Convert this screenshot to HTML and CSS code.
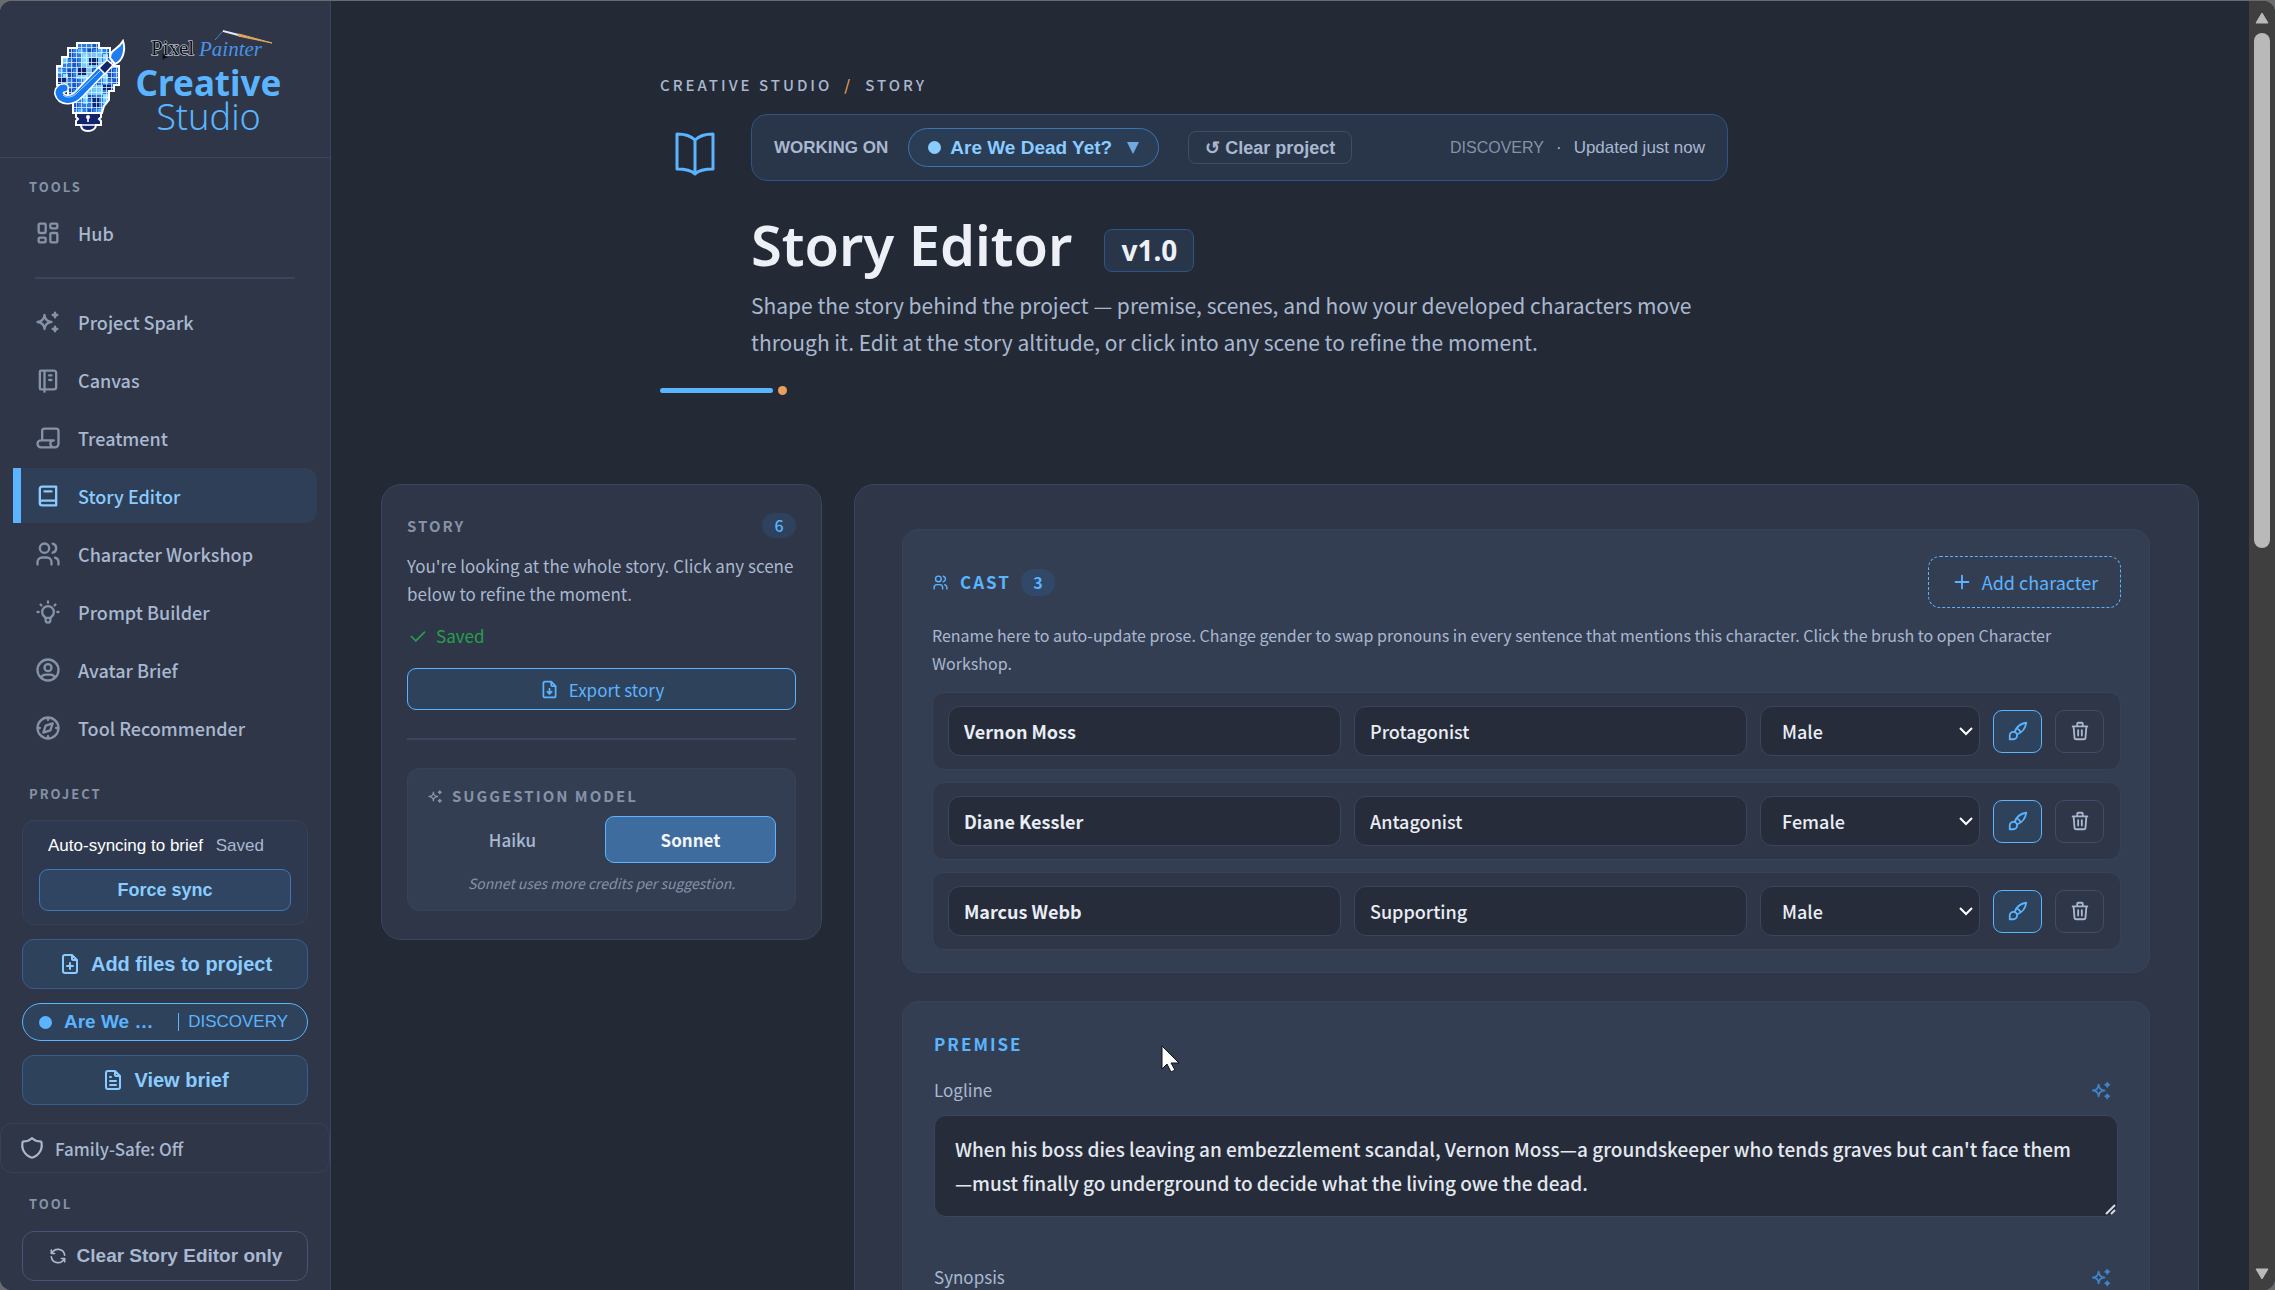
FILE: index.html
```html
<!DOCTYPE html>
<html lang="en">
<head>
<meta charset="utf-8">
<title>Story Editor</title>
<link rel="stylesheet" href="styles.css">
</head>
<body>
<svg class="sprite" aria-hidden="true">
  <symbol id="i-dash" viewBox="0 0 24 24"><path d="M5 4h4a1 1 0 0 1 1 1v6a1 1 0 0 1-1 1H5a1 1 0 0 1-1-1V5a1 1 0 0 1 1-1M5 16h4a1 1 0 0 1 1 1v2a1 1 0 0 1-1 1H5a1 1 0 0 1-1-1v-2a1 1 0 0 1 1-1M15 12h4a1 1 0 0 1 1 1v6a1 1 0 0 1-1 1h-4a1 1 0 0 1-1-1v-6a1 1 0 0 1 1-1M15 4h4a1 1 0 0 1 1 1v2a1 1 0 0 1-1 1h-4a1 1 0 0 1-1-1V5a1 1 0 0 1 1-1"/></symbol>
  <symbol id="i-spark" viewBox="0 0 24 24"><path d="M16 18a2 2 0 0 1 2 2a2 2 0 0 1 2-2a2 2 0 0 1-2-2a2 2 0 0 1-2 2zM16 6a2 2 0 0 1 2 2a2 2 0 0 1 2-2a2 2 0 0 1-2-2a2 2 0 0 1-2 2zM9 18a6 6 0 0 1 6-6a6 6 0 0 1-6-6a6 6 0 0 1-6 6a6 6 0 0 1 6 6z"/></symbol>
  <symbol id="i-note" viewBox="0 0 24 24"><path d="M6 4h11a2 2 0 0 1 2 2v12a2 2 0 0 1-2 2H6a1 1 0 0 1-1-1V5a1 1 0 0 1 1-1M9 4v18M13 8h2M13 12h2"/></symbol>
  <symbol id="i-script" viewBox="0 0 24 24"><path d="M17 20H6a3 3 0 0 1 0-6h11a3 3 0 0 0 0 6h1a3 3 0 0 0 3-3V6a2 2 0 0 0-2-2H9a2 2 0 0 0-2 2v8"/></symbol>
  <symbol id="i-book" viewBox="0 0 24 24"><path d="M19 4v16H7a2 2 0 0 1-2-2V6a2 2 0 0 1 2-2h12zM19 16H7a2 2 0 0 0-2 2M9 8h6"/></symbol>
  <symbol id="i-users" viewBox="0 0 24 24"><path d="M5 7a4 4 0 1 0 8 0a4 4 0 1 0-8 0M3 21v-2a4 4 0 0 1 4-4h4a4 4 0 0 1 4 4v2M16 3.130a4 4 0 0 1 0 7.750M21 21v-2a4 4 0 0 0-3-3.850"/></symbol>
  <symbol id="i-bulb" viewBox="0 0 24 24"><path d="M3 12h1M12 3v1M20 12h1M5.600 5.600l.7.7M18.400 5.600l-.7.7M9 16a5 5 0 1 1 6 0a3.500 3.500 0 0 0-1 3a2 2 0 0 1-4 0a3.500 3.500 0 0 0-1-3M9.700 17h4.600"/></symbol>
  <symbol id="i-user" viewBox="0 0 24 24"><path d="M3 12a9 9 0 1 0 18 0a9 9 0 1 0-18 0M9 10a3 3 0 1 0 6 0a3 3 0 1 0-6 0M6.168 18.849a4 4 0 0 1 3.832-2.849h4a4 4 0 0 1 3.834 2.855"/></symbol>
  <symbol id="i-compass" viewBox="0 0 24 24"><path d="M8 16l2-6l6-2l-2 6zM3 12a9 9 0 1 0 18 0a9 9 0 1 0-18 0M12 3v2M12 19v2M3 12h2M19 12h2"/></symbol>
  <symbol id="i-fplus" viewBox="0 0 24 24"><path d="M14 3v4a1 1 0 0 0 1 1h4M17 21H7a2 2 0 0 1-2-2V5a2 2 0 0 1 2-2h7l5 5v11a2 2 0 0 1-2 2zM12 11v6M9 14h6"/></symbol>
  <symbol id="i-ftext" viewBox="0 0 24 24"><path d="M14 3v4a1 1 0 0 0 1 1h4M17 21H7a2 2 0 0 1-2-2V5a2 2 0 0 1 2-2h7l5 5v11a2 2 0 0 1-2 2zM9 9h1M9 13h6M9 17h6"/></symbol>
  <symbol id="i-fdown" viewBox="0 0 24 24"><path d="M14 3v4a1 1 0 0 0 1 1h4M17 21H7a2 2 0 0 1-2-2V5a2 2 0 0 1 2-2h7l5 5v11a2 2 0 0 1-2 2zM12 17v-6M9.500 14.500l2.500 2.500l2.500-2.500"/></symbol>
  <symbol id="i-shield" viewBox="0 0 24 24"><path d="M12 3a12 12 0 0 0 8.500 3a12 12 0 0 1-8.500 15a12 12 0 0 1-8.500-15a12 12 0 0 0 8.500-3"/></symbol>
  <symbol id="i-refresh" viewBox="0 0 24 24"><path d="M20 11a8.100 8.100 0 0 0-15.500-2M4 5v4h4M4 13a8.100 8.100 0 0 0 15.500 2M20 19v-4h-4"/></symbol>
  <symbol id="i-check" viewBox="0 0 24 24"><path d="M5 12l5 5L20 7"/></symbol>
  <symbol id="i-plus" viewBox="0 0 24 24"><path d="M12 5v14M5 12h14"/></symbol>
  <symbol id="i-brush" viewBox="0 0 24 24"><path d="M3 21v-4a4 4 0 1 1 4 4H3M21 3A16 16 0 0 0 8.200 13.200M21 3a16 16 0 0 1-10.200 12.800M10.600 9a9 9 0 0 1 4.400 4.400"/></symbol>
  <symbol id="i-trash" viewBox="0 0 24 24"><path d="M4 7h16M10 11v6M14 11v6M5 7l1 12a2 2 0 0 0 2 2h8a2 2 0 0 0 2-2l1-12M9 7V4a1 1 0 0 1 1-1h4a1 1 0 0 1 1 1v3"/></symbol>
</svg>

<div class="app">
  <aside class="sidebar">
    <div class="brand">
      <svg class="brand-mark" viewBox="0 0 76 96" aria-hidden="true">
        <defs>
          <pattern id="px" width="20" height="20" patternUnits="userSpaceOnUse">
            <rect width="20" height="20" fill="#2f7de6"/>
            <rect width="5" height="10" fill="#1b57c4"/><rect x="10" width="5" height="5" fill="#6cc8ff"/>
            <rect x="5" y="10" width="5" height="5" fill="#55b2ff"/><rect x="15" y="10" width="5" height="10" fill="#1a4db4"/>
            <rect x="10" y="15" width="5" height="5" fill="#8fe0ff"/>
          </pattern>
          <pattern id="grid" width="5" height="5" x="3" y="3" patternUnits="userSpaceOnUse"><path d="M0 0h5M0 0v5" stroke="#e6f4ff" stroke-width="1.400"/></pattern>
          <clipPath id="shape"><path d="M24 4h22v5h11v9h4v9h5v19h-5v6h-5v9l-5 6l-2 7H20V61h-5v-9H9v-6H4V27h5v-9h6V9h9z"/></clipPath>
        </defs>
        <g clip-path="url(#shape)">
          <rect width="76" height="76" fill="url(#px)"/>
          <path d="M28 14h20v14H38v12H24V28h4zM34 46h16v10H34z" fill="#8adfff" opacity=".8"/>
          <path d="M36 19h9v7h-9zM25 28h9v8h-9zM5 38h9v7H5zM40 58h6v10h-6zM50 46h8v5h-8z" fill="#12256b"/>
          <rect width="76" height="76" fill="url(#grid)"/>
        </g>
        <path d="M24 4h22v5h11v9h4v9h5v19h-5v6h-5v9l-5 6l-2 7H20V61h-5v-9H9v-6H4V27h5v-9h6V9h9z" fill="none" stroke="#fff" stroke-width="2"/>
        <path d="M23 74h25v4l-2 2l2 2v4h-5c0 4-4 6-8 6s-7-2-7-6h-5v-4l2-2l-2-2z" fill="#14246a" stroke="#fff" stroke-width="2"/>
        <path d="M24 86h23M35 77v6" stroke="#fff" stroke-width="1.600"/>
        <circle cx="35" cy="78" r="2" fill="#fff"/>
        <path d="M50 30L26 55c-7 8-18 7-20-1c0-3 2-5 5-5" fill="none" stroke="#fff" stroke-width="10" stroke-linecap="round"/>
        <path d="M50 30L26 55c-7 8-18 7-20-1c0-3 2-5 5-5" fill="none" stroke="#1679f2" stroke-width="7" stroke-linecap="round"/>
        <path d="M47 32L24 54c-5 5-11 5-14 2" fill="none" stroke="#a9dcff" stroke-width="1"/>
        <path d="M54 21l6 5-8 9-6-6z" fill="#12256b" stroke="#fff" stroke-width="1.600"/>
        <path d="M57 19c0-9 8-8 13-17c3 9 0 20-8 23z" fill="#1f7df0" stroke="#fff" stroke-width="2"/>
      </svg>
      <div class="brand-words">
        <svg class="brand-sig" viewBox="-4 -4 128 38" aria-hidden="true">
          <text x="2" y="26" class="sig-pixel">Pixel</text>
          <text x="50" y="27" class="sig-painter">Painter</text>
          <path d="M66 11l8-9" stroke="#3b86d8" stroke-width="1" fill="none"/>
          <path d="M74 1l16 4-1 2-15-4z" fill="#dfe9fb"/><path d="M90 5l33 9-34-7z" fill="#e0a860" stroke="#e0a860" stroke-width="1"/>
          <path d="M13 24l6 5-3 0-2 2z" fill="#0b0d12"/>
        </svg>
        <strong class="brand-name">Creative</strong>
        <span class="brand-sub">Studio</span>
      </div>
    </div>

    <h2 class="side-label">TOOLS</h2>
    <nav class="nav">
      <a href="#hub"><svg class="icon"><use href="#i-dash"/></svg>Hub</a>
      <hr>
      <a href="#spark"><svg class="icon"><use href="#i-spark"/></svg>Project Spark</a>
      <a href="#canvas"><svg class="icon"><use href="#i-note"/></svg>Canvas</a>
      <a href="#treatment"><svg class="icon"><use href="#i-script"/></svg>Treatment</a>
      <a href="#story" class="active" aria-current="page"><svg class="icon"><use href="#i-book"/></svg>Story Editor</a>
      <a href="#characters"><svg class="icon"><use href="#i-users"/></svg>Character Workshop</a>
      <a href="#prompts"><svg class="icon"><use href="#i-bulb"/></svg>Prompt Builder</a>
      <a href="#avatar"><svg class="icon"><use href="#i-user"/></svg>Avatar Brief</a>
      <a href="#recommender"><svg class="icon"><use href="#i-compass"/></svg>Tool Recommender</a>
    </nav>

    <h2 class="side-label project-label">PROJECT</h2>
    <div class="side-stack">
      <div class="sync">
        <p>Auto-syncing to brief <span>Saved</span></p>
        <button type="button" class="sync-btn">Force sync</button>
      </div>
      <button type="button" class="side-btn"><svg class="icon"><use href="#i-fplus"/></svg>Add files to project</button>
      <button type="button" class="side-pill"><i class="dot"></i><b>Are We …</b><span>DISCOVERY</span></button>
      <button type="button" class="side-btn"><svg class="icon"><use href="#i-ftext"/></svg>View brief</button>
    </div>
    <button type="button" class="family"><svg class="icon"><use href="#i-shield"/></svg>Family-Safe: Off</button>
    <h2 class="side-label tool-label">TOOL</h2>
    <div class="side-stack">
      <button type="button" class="side-btn quiet"><svg class="icon"><use href="#i-refresh"/></svg>Clear Story Editor only</button>
    </div>
  </aside>

  <main class="main">
    <header class="page-head">
      <div class="crumbs"><a href="#home">CREATIVE STUDIO</a><i>/</i><span>STORY</span></div>
      <div class="head-grid">
        <svg class="head-icon" viewBox="0 0 42 46" aria-hidden="true"><path d="M3 3c8 0 14 2 18 6c4-4 10-6 18-6v35c-8 0-14 1-18 5c-4-4-10-5-18-5zM21 9v34"/></svg>
        <div class="head-body">
          <div class="working">
            <span class="working-label">WORKING ON</span>
            <button type="button" class="project-pill"><i class="dot"></i>Are We Dead Yet?<svg class="caret" viewBox="0 0 12 12"><path d="M0 0h12L6 12z"/></svg></button>
            <button type="button" class="clear-btn">↺ Clear project</button>
            <span class="stage">DISCOVERY</span><span class="sep">·</span><span class="updated">Updated just now</span>
          </div>
          <div class="title-row"><h1>Story Editor</h1><span class="version">v1.0</span></div>
          <p class="lede">Shape the story behind the project — premise, scenes, and how your developed characters move through it. Edit at the story altitude, or click into any scene to refine the moment.</p>
        </div>
      </div>
      <div class="accent"><i></i><b></b></div>
    </header>

    <div class="columns">
      <section class="story-card">
        <div class="card-top"><h2>STORY</h2><span class="count">6</span></div>
        <p class="story-text">You're looking at the whole story. Click any scene below to refine the moment.</p>
        <p class="saved"><svg class="icon"><use href="#i-check"/></svg>Saved</p>
        <button type="button" class="export"><svg class="icon"><use href="#i-fdown"/></svg>Export story</button>
        <hr>
        <div class="model">
          <h3><svg class="icon"><use href="#i-spark"/></svg>SUGGESTION MODEL</h3>
          <div class="model-row">
            <button type="button">Haiku</button>
            <button type="button" class="on" aria-pressed="true">Sonnet</button>
          </div>
          <p>Sonnet uses more credits per suggestion.</p>
        </div>
      </section>

      <section class="editor">
        <div class="panel cast">
          <div class="cast-head">
            <h2><svg class="icon"><use href="#i-users"/></svg>CAST</h2><span class="count">3</span>
            <button type="button" class="add"><svg class="icon"><use href="#i-plus"/></svg>Add character</button>
          </div>
          <p class="cast-text">Rename here to auto-update prose. Change gender to swap pronouns in every sentence that mentions this character. Click the brush to open Character Workshop.</p>
          <div class="rows">
            <div class="row">
              <input class="name" aria-label="Name" value="Vernon Moss"><input aria-label="Role" value="Protagonist">
              <select aria-label="Gender"><option>Male</option><option>Female</option></select>
              <button type="button" class="sq brush" aria-label="Open in Character Workshop"><svg class="icon"><use href="#i-brush"/></svg></button>
              <button type="button" class="sq" aria-label="Delete"><svg class="icon"><use href="#i-trash"/></svg></button>
            </div>
            <div class="row">
              <input class="name" aria-label="Name" value="Diane Kessler"><input aria-label="Role" value="Antagonist">
              <select aria-label="Gender"><option>Female</option><option>Male</option></select>
              <button type="button" class="sq brush" aria-label="Open in Character Workshop"><svg class="icon"><use href="#i-brush"/></svg></button>
              <button type="button" class="sq" aria-label="Delete"><svg class="icon"><use href="#i-trash"/></svg></button>
            </div>
            <div class="row">
              <input class="name" aria-label="Name" value="Marcus Webb"><input aria-label="Role" value="Supporting">
              <select aria-label="Gender"><option>Male</option><option>Female</option></select>
              <button type="button" class="sq brush" aria-label="Open in Character Workshop"><svg class="icon"><use href="#i-brush"/></svg></button>
              <button type="button" class="sq" aria-label="Delete"><svg class="icon"><use href="#i-trash"/></svg></button>
            </div>
          </div>
        </div>

        <div class="panel premise">
          <h2>PREMISE</h2>
          <div class="field-head"><label for="logline">Logline</label><button type="button" class="suggest" aria-label="Suggest logline"><svg class="icon"><use href="#i-spark"/></svg></button></div>
          <textarea id="logline" rows="2">When his boss dies leaving an embezzlement scandal, Vernon Moss—a groundskeeper who tends graves but can't face them—must finally go underground to decide what the living owe the dead.</textarea>
          <div class="field-head"><label for="synopsis">Synopsis</label><button type="button" class="suggest" aria-label="Suggest synopsis"><svg class="icon"><use href="#i-spark"/></svg></button></div>
          <textarea id="synopsis" rows="4"></textarea>
        </div>
      </section>
    </div>
  </main>

  <div class="scrollbar" aria-hidden="true">
    <svg viewBox="0 0 14 12"><path d="M7 1l6 10H1z"/></svg>
    <div class="track"><div class="thumb"></div></div>
    <svg viewBox="0 0 14 12"><path d="M1 1h12L7 11z"/></svg>
  </div>
</div>
<svg class="cursor" viewBox="0 0 19 28" aria-hidden="true"><path d="M1 1v23l5-5l4 8l4-2l-4-7h8z"/></svg>
</body>
</html>
```
FILE: styles.css
```css
:root {
  --bg: #242a35;
  --card: #2e3647;
  --inner: #343e52;
  --input: #262c39;
  --line: #3a4560;
  --accent: #5ab4ff;
  --light: #8accff;
  --text: #a9b8d0;
  --muted: #8592a8;
  --tint: #2f425b;
  --sans: "Noto Sans CJK SC", "Noto Sans", sans-serif;
  --arial: "Liberation Sans", Arial, sans-serif;
  --head: "Noto Sans", sans-serif;
}
* { box-sizing: border-box; }
body { margin: 0; background: #6a6b6e; color: var(--text); font-family: var(--sans); font-size: 17px; overflow: hidden; }
h1, h2, h3, p { margin: 0; }
button, input, select, textarea { font: inherit; color: inherit; margin: 0; }
button { display: flex; align-items: center; justify-content: center; padding: 0; border: 1px solid transparent; background: none; }
a { color: inherit; text-decoration: none; }
.sprite { display: none; }
.icon { width: 24px; height: 24px; flex: none; fill: none; stroke: currentColor; stroke-width: 2; stroke-linecap: round; stroke-linejoin: round; }
.dot { width: 13px; height: 13px; border-radius: 50%; background: currentColor; flex: none; }

.app { display: flex; height: calc(100vh - 1px); margin-top: 1px; background: var(--bg); border-radius: 12px; overflow: hidden; }

/* Sidebar */
.sidebar { flex: 0 0 331px; background: var(--card); border-right: 1px solid var(--line); overflow: hidden; }
.brand { display: flex; justify-content: center; gap: 8px; height: 157px; padding: 24px 0 0 3px; border-bottom: 1px solid var(--line); }
.brand-mark { width: 76px; height: 96px; margin-top: 14px; }
.brand-words { display: flex; flex-direction: column; align-items: center; width: 144px; font-family: var(--head); color: var(--accent); font-size: 36px; line-height: 34px; }
.brand-sig { width: 128px; height: 38px; flex: none; margin-bottom: 3px; }
.sig-pixel { font: 21px "Liberation Serif", serif; fill: #0b0d12; stroke: #e8ecf4; stroke-width: 1; paint-order: stroke; }
.sig-painter { font: italic 21px "Liberation Serif", serif; fill: #4a93e6; }
.brand-name { font-size: 35px; font-weight: 700; }
.brand-sub { font-weight: 300; }
.side-label { padding: 0 29px; font-size: 13px; line-height: 20px; font-weight: 700; letter-spacing: 2px; color: var(--muted); margin-top: 19px; }
.nav { display: flex; flex-direction: column; gap: 3px; padding: 8px 13px 0; font-size: 18px; font-weight: 500; }
.nav a { display: flex; align-items: center; gap: 16px; height: 55px; padding-left: 13px; border-left: 8px solid transparent; border-radius: 0 12px 12px 0; }
.nav .icon { width: 28px; height: 28px; color: var(--muted); }
.nav hr { width: 260px; height: 2px; border: 0; background: var(--line); margin: 14px auto 12px; }
.nav .active { background: #2f3f57; border-color: var(--accent); color: var(--light); }
.nav .active .icon { color: var(--light); }
.project-label { margin-top: 29px; margin-bottom: 16px; }
.side-stack { display: flex; flex-direction: column; gap: 14px; padding: 0 22px; font-family: var(--arial); }
.sync { border: 1px solid #374259; border-radius: 12px; background: #2e3950; padding: 16px 16px 13px; }
.sync p { font-size: 17px; line-height: 18px; padding-left: 9px; color: #fff; white-space: nowrap; margin-bottom: 14px; }
.sync span { color: var(--text); margin-left: 8px; }
.sync-btn { width: 100%; height: 42px; border-color: #3f78b4; border-radius: 9px; background: #2f4561; color: var(--light); font-size: 18px; font-weight: 700; }
.side-btn { width: 100%; height: 50px; gap: 9px; border-color: #355f8f; border-radius: 12px; background: var(--tint); color: var(--light); font-size: 20px; font-weight: 700; white-space: nowrap; }
.side-pill { width: 100%; height: 38px; justify-content: flex-start; gap: 12px; padding: 0 19px 0 16px; border-color: var(--accent); border-radius: 19px; background: var(--tint); color: var(--accent); font-size: 19px; }
.side-pill span { margin-left: auto; padding-left: 9px; border-left: 1px solid currentColor; font-size: 17px; line-height: 18px; }
.family { width: 330px; height: 50px; margin-top: 18px; padding-left: 18px; justify-content: flex-start; gap: 10px; border-color: #374259; border-radius: 12px; font-size: 17px; font-weight: 500; }
.family .icon { width: 26px; height: 26px; }
.tool-label { margin-top: 21px; margin-bottom: 17px; }
.quiet { background: none; border-color: #465576; color: var(--text); font-size: 19px; }
.quiet .icon { width: 20px; height: 20px; }

/* Header */
.main { flex: 1; min-width: 0; padding: 72px 50px 0; overflow: hidden; }
.page-head { width: 100%; max-width: 1260px; margin: 0 auto; }
.crumbs { display: flex; gap: 12px; font-size: 15px; line-height: 24px; font-weight: 500; letter-spacing: 3px; }
.crumbs i { color: #e8a05c; font-style: normal; }
.head-grid { display: flex; gap: 34px; margin-top: 17px; padding-left: 14px; }
.head-icon { width: 42px; height: 46px; flex: none; margin: 17px 1px 0 0; fill: none; stroke: var(--accent); stroke-width: 3; stroke-linejoin: round; stroke-linecap: round; }
.head-body { flex: 0 1 977px; }
.working { display: flex; align-items: center; height: 67px; padding: 0 22px; border: 1px solid #2e5583; border-radius: 16px; background: #293549; font-family: var(--arial); font-size: 17px; white-space: nowrap; }
.working-label { font-weight: 700; margin-right: 20px; }
.project-pill { height: 39px; gap: 9px; padding: 0 19px; border-color: #3b76b3; border-radius: 20px; background: #2b3c55; color: var(--light); font-size: 19px; font-weight: 700; }
.caret { width: 12px; height: 12px; margin-left: 6px; fill: #6fa9e0; }
.clear-btn { height: 33px; margin: 0 auto 0 29px; padding: 0 16px; border-color: #414d68; border-radius: 8px; font-size: 18px; font-weight: 700; }
.stage { color: var(--muted); font-size: 16px; }
.sep { margin: 0 12px; }
.title-row { display: flex; align-items: center; gap: 32px; margin-top: 26px; }
h1 { font-family: var(--head); font-size: 56px; line-height: 74px; font-weight: 600; color: #edf0f6; }
.version { margin-top: 12px; padding: 0 16px; border: 1px solid #2e5583; border-radius: 8px; background: #293549; font: 700 28px/41px var(--head); color: #edf0f6; }
.lede { font-size: 21px; line-height: 37px; margin-top: 6px; }
.accent { display: flex; align-items: center; gap: 5px; margin-top: 25px; }
.accent i { width: 113px; height: 5px; border-radius: 3px; background: var(--accent); }
.accent b { width: 9px; height: 9px; border-radius: 50%; background: #e8a05c; }

/* Columns */
.columns { display: flex; align-items: flex-start; gap: 32px; margin-top: 89px; }
.story-card { flex: 0 0 441px; padding: 28px 25px; border: 1px solid var(--line); border-radius: 20px; background: var(--card); }
.card-top { display: flex; align-items: center; justify-content: space-between; }
.card-top h2, .model h3 { font-size: 15px; line-height: 24px; font-weight: 700; letter-spacing: 2px; color: var(--muted); }
.count { min-width: 34px; padding: 0 10px; border-radius: 13px; background: #2f425d; color: var(--accent); font-size: 16px; line-height: 25px; font-weight: 500; text-align: center; }
.story-text { margin-top: 14px; font-size: 17px; line-height: 28px; }
.saved { display: flex; align-items: center; gap: 8px; margin-top: 16px; font-size: 17px; line-height: 24px; color: #25a04d; }
.saved .icon { width: 21px; height: 21px; }
.export { width: 100%; height: 42px; gap: 9px; margin-top: 20px; border-color: var(--accent); border-radius: 9px; background: var(--tint); color: var(--accent); }
.export .icon { width: 21px; height: 21px; }
.story-card hr { height: 2px; border: 0; background: var(--line); margin: 28px 0; }
.model { padding: 15px 19px; border: 1px solid #38435a; border-radius: 12px; background: var(--inner); }
.model h3 { display: flex; align-items: center; gap: 8px; }
.model h3 .icon { width: 17px; height: 17px; }
.model-row { display: grid; grid-template-columns: 1fr 1fr; gap: 7px; margin-top: 8px; }
.model-row button { height: 47px; border-radius: 9px; font-weight: 500; }
.model-row .on { border-color: var(--accent); background: #3f6c9f; color: #f3f5f9; font-weight: 700; }
.model p { margin-top: 8px; font-size: 14px; line-height: 24px; font-style: italic; color: var(--muted); text-align: center; }

.editor { flex: 1; min-width: 0; display: flex; flex-direction: column; gap: 28px; padding: 44px 48px 44px 47px; border: 1px solid var(--line); border-radius: 20px; background: var(--card); }
.panel { border: 1px solid #38435a; border-radius: 16px; background: var(--inner); }
.cast { padding: 26px 28px 22px 29px; }
.cast-head { display: flex; align-items: center; gap: 10px; }
.cast-head .count { background: #314868; font-weight: 700; line-height: 27px; }
.panel h2 { display: flex; align-items: center; gap: 11px; font-size: 17px; line-height: 24px; font-weight: 700; letter-spacing: 2px; color: var(--accent); }
.cast-head h2 .icon { width: 17px; height: 17px; }
.add { margin-left: auto; width: 193px; height: 52px; gap: 9px; border: 1px dashed var(--accent); border-radius: 12px; color: var(--accent); font-size: 18px; }
.add .icon { width: 22px; height: 22px; }
.cast-text { margin-top: 13px; font-size: 16px; line-height: 28px; }
.rows { display: flex; flex-direction: column; gap: 12px; margin-top: 15px; }
.row { display: grid; grid-template-columns: 1fr 1fr 220px 49px 49px; align-items: center; gap: 13px; padding: 13px 16px 13px 15px; border: 1px solid #38435a; border-radius: 12px; background: var(--card); }
.row input, .row select { width: 100%; height: 50px; padding: 0 15px; border: 1px solid var(--line); border-radius: 12px; background: var(--input); color: #e9edf5; font-size: 18px; font-weight: 500; }
.row .name { font-weight: 700; }
.row select { padding: 0 0 0 21px; appearance: none; background: var(--input) url("data:image/svg+xml,%3Csvg xmlns='http://www.w3.org/2000/svg' width='16' height='10'%3E%3Cpath d='M2 2l6 6l6-6' fill='none' stroke='%23fff' stroke-width='2'/%3E%3C/svg%3E") no-repeat right 5px center; }
.sq { height: 43px; border-color: #414d68; border-radius: 9px; }
.sq .icon { width: 22px; height: 22px; }
.brush { border-color: var(--accent); background: var(--tint); color: var(--accent); }
.premise { padding: 30px 31px; }
.field-head { display: flex; align-items: center; justify-content: space-between; margin-top: 20px; margin-bottom: 11px; font-size: 17px; line-height: 28px; }
.suggest { width: 34px; height: 28px; color: #3f83c8; }
.suggest .icon { width: 23px; height: 23px; }
textarea { display: block; width: 100%; padding: 16px 35px 16px 20px; border: 1px solid var(--line); border-radius: 12px; background: var(--input); color: #e3e8f0; font-size: 19px; line-height: 34px; font-weight: 500; resize: vertical; overflow: hidden; }
textarea::-webkit-resizer { background: url("data:image/svg+xml,%3Csvg xmlns='http://www.w3.org/2000/svg' width='15' height='15'%3E%3Cpath d='M4 13l9-9M9 13l4-4' fill='none' stroke='%23d8dce4' stroke-width='2'/%3E%3C/svg%3E") no-repeat right bottom; }
textarea + .field-head { margin-top: 46px; }

/* Scrollbar */
.scrollbar { flex: 0 0 26px; display: flex; flex-direction: column; align-items: center; gap: 9px; padding: 11px 0 10px; background: #3f3f3f; }
.scrollbar svg { width: 14px; height: 12px; fill: #bababa; stroke: #bababa; stroke-width: 1; stroke-linejoin: round; }
.track { flex: 1; width: 16px; }
.thumb { height: 42%; border-radius: 8px; background: #b9b9b9; }

.cursor { position: absolute; left: 1161px; top: 1045px; width: 19px; height: 28px; fill: #fff; stroke: #10131a; stroke-width: 1; }
```
